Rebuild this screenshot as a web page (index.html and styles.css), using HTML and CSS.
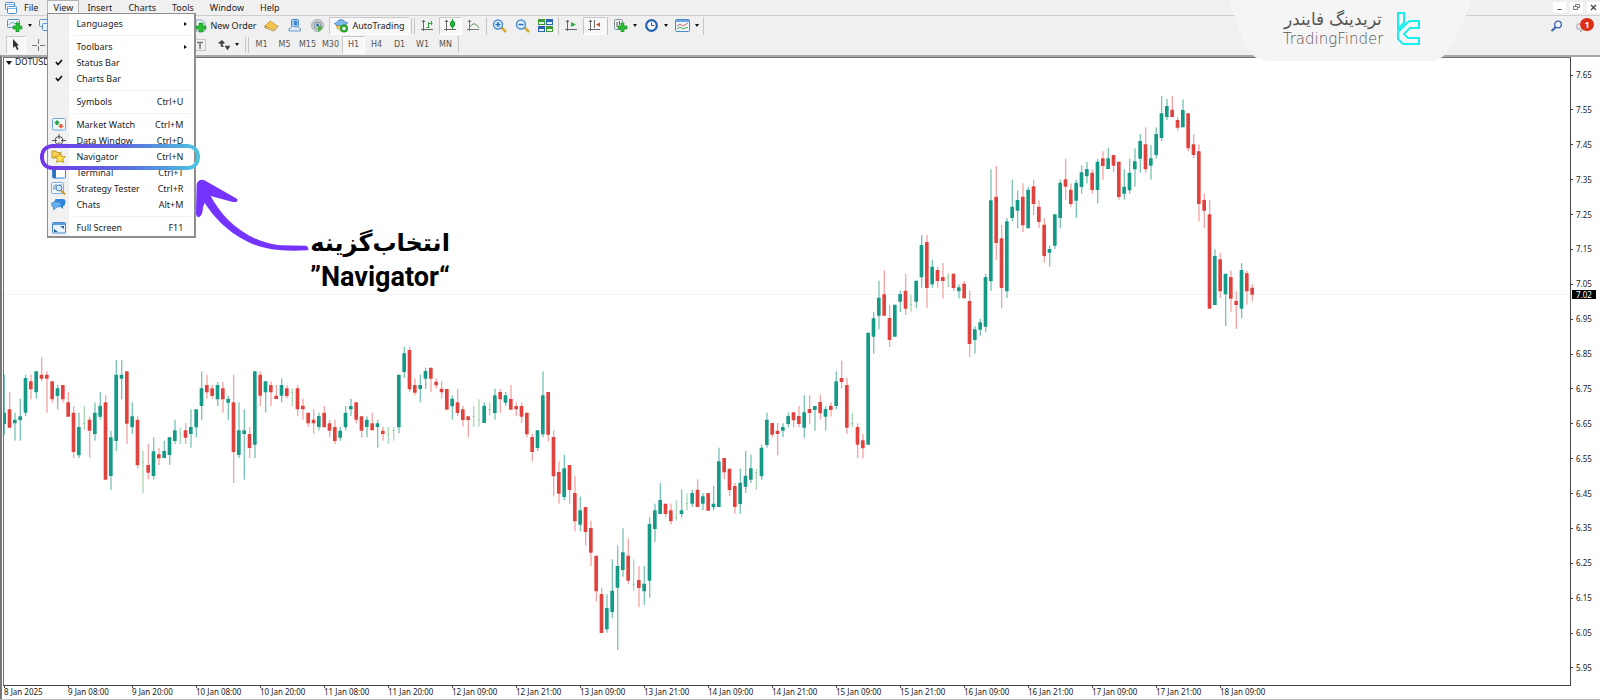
FILE: index.html
```html
<!DOCTYPE html>
<html lang="en">
<head>
<meta charset="utf-8">
<title>DOTUSD chart</title>
<link rel="stylesheet" href="styles.css">
</head>
<body>
<div class="app">
  <header class="menubar">
    <svg class="app-icon" width="14" height="12" viewBox="0 0 14 12"><g fill="#fff" stroke="#4b8fd6"><rect x="1.500" y=".5" width="9" height="7" rx="1"/><rect x="3.500" y="4.500" width="9" height="7" rx="1"/><path d="M2 2.500h8M4 6.500h8" stroke="#7fb2e6"/></g></svg>
    <nav class="menus">
      <button>File</button>
      <div class="menu-holder">
        <button class="open">View</button>
        <div class="popup">
          <button class="item"><span class="ico"></span><span class="name">Languages</span><span class="more"></span></button>
          <hr>
          <button class="item"><span class="ico"></span><span class="name">Toolbars</span><span class="more"></span></button>
          <button class="item"><span class="ico"><svg width="8" height="7" viewBox="0 0 8 7"><path d="M1 3l2 2.500 4-4.500" fill="none" stroke="#111" stroke-width="1.700"/></svg></span><span class="name">Status Bar</span></button>
          <button class="item"><span class="ico"><svg width="8" height="7" viewBox="0 0 8 7"><path d="M1 3l2 2.500 4-4.500" fill="none" stroke="#111" stroke-width="1.700"/></svg></span><span class="name">Charts Bar</span></button>
          <hr>
          <button class="item"><span class="ico"></span><span class="name">Symbols</span><kbd>Ctrl+U</kbd></button>
          <hr>
          <button class="item"><span class="ico"><svg width="14" height="13" viewBox="0 0 14 13"><rect x=".5" y=".5" width="13" height="11.500" rx="1" fill="#f4f9ff" stroke="#73a9df"/><path d="M5 2l3 3H6.500v2h-3V5H2z" fill="#27a344"/><path d="M9 10.500L6 8h1.500V6h3v2H12z" fill="#e8603c"/></svg></span><span class="name">Market Watch</span><kbd>Ctrl+M</kbd></button>
          <button class="item"><span class="ico"><svg width="14" height="13" viewBox="0 0 14 13"><g fill="none" stroke="#555"><circle cx="7" cy="6.500" r="4"/><path d="M7 0v5M7 8v5M0 6.500h5M9 6.500h5"/></g></svg></span><span class="name">Data Window</span><kbd>Ctrl+D</kbd></button>
          <button class="item marked"><span class="ico"><svg width="15" height="13" viewBox="0 0 15 13"><path d="M1 1h4l1 1.500h4V8H1z" fill="#f5cf58" stroke="#b98a1c" stroke-width=".8"/><path d="M9 3.500l1.800 2.800 3.500.4-2.500 2.300.8 3.500L9 11l-3.300 1.500.6-3.500L4 6.700l3.300-.4z" fill="#ffe04a" stroke="#b88a17" stroke-width=".8"/></svg></span><span class="name">Navigator</span><kbd>Ctrl+N</kbd></button>
          <button class="item"><span class="ico"><svg width="14" height="12" viewBox="0 0 14 12"><rect x=".5" y=".5" width="13" height="10.500" rx="1" fill="#fff" stroke="#3f86d0"/><path d="M1 1h3v10H1z" fill="#2f6fbd"/></svg></span><span class="name">Terminal</span><kbd>Ctrl+T</kbd></button>
          <button class="item"><span class="ico"><svg width="15" height="13" viewBox="0 0 15 13"><rect x=".5" y=".5" width="12" height="11" rx="1" fill="#eef5fc" stroke="#86aed6"/><path d="M3 3v5M5 2v5M10 2v3" stroke="#5b86b5"/><circle cx="8" cy="6" r="3" fill="#d4e9fb" stroke="#4a83bd"/><path d="M10 8.500l4 4" stroke="#c39b2a" stroke-width="2"/></svg></span><span class="name">Strategy Tester</span><kbd>Ctrl+R</kbd></button>
          <button class="item"><span class="ico"><svg width="15" height="13" viewBox="0 0 15 13"><path d="M5 1h7q2.500 0 2.500 3T12 8.500V11L9 8.500H5Q3.500 8 3.500 4.500T5 1z" fill="#2f86d8"/><path d="M3 4h5q2 0 2 2.500T8 9H6l-3.500 3V9Q.5 9 .5 6.500T3 4z" fill="#65b0ee" stroke="#2f7fc9" stroke-width=".6"/></svg></span><span class="name">Chats</span><kbd>Alt+M</kbd></button>
          <hr>
          <button class="item"><span class="ico"><svg width="14" height="12" viewBox="0 0 14 12"><rect x=".5" y=".5" width="13" height="10.500" rx="1" fill="#e9f3fd" stroke="#4587cc"/><path d="M1 1h12v2H1z" fill="#5d9be0"/><path d="M8 4h4v3zM6 10H2V7z" fill="#235f9f"/></svg></span><span class="name">Full Screen</span><kbd>F11</kbd></button>
        </div>
      </div>
      <button>Insert</button><button>Charts</button><button>Tools</button><button>Window</button><button>Help</button>
    </nav>
    <div class="window-buttons">
      <button aria-label="Minimize"><svg width="7" height="7" viewBox="0 0 7 7"><path d="M1.500 5.500h4" stroke="#555"/></svg></button>
      <button aria-label="Restore"><svg width="7" height="7" viewBox="0 0 7 7"><path d="M2.500 2V.5h4v3H5M.5 2.500h4v3h-4z" fill="none" stroke="#777"/></svg></button>
      <button aria-label="Close"><svg width="7" height="7" viewBox="0 0 7 7"><path d="M1 1l5 5M6 1L1 6" stroke="#444" stroke-width="1.300"/></svg></button>
    </div>
  </header>

  <div class="toolbar main-tools">
    <button class="drop first-drop" aria-label="New chart"><svg width="16" height="13" viewBox="0 0 16 13"><rect x=".5" y=".5" width="12" height="8" rx="1" fill="#eaf4ff" stroke="#5b92c9"/><path d="M2 6l3-3 3 2 3-3" fill="none" stroke="#6aa"/><path d="M9 4h3v3h3v3h-3v3H9v-3H6V7h3z" fill="#2bbf35" stroke="#138a1f" stroke-width=".6"/></svg></button>
    <button class="profiles" aria-label="Profiles"><svg width="15" height="13" viewBox="0 0 15 13"><g fill="#eaf4ff" stroke="#5b92c9"><rect x=".5" y=".5" width="10" height="7" rx="1"/><rect x="3.500" y="4.500" width="10" height="7" rx="1"/></g></svg></button>
    <button class="wide" ><svg width="14" height="14" viewBox="0 0 14 14"><path d="M3 1h6l3 3v8H3z" fill="#f4f6f8" stroke="#8aa0b5"/><path d="M6 4h4v3h3v3h-3v3H6v-3H3V7h3z" fill="#2bbf35" stroke="#138a1f" stroke-width=".6"/></svg>New Order</button>
    <button aria-label="Market"><svg width="15" height="12" viewBox="0 0 15 12"><path d="M1 6l5-5 8 5.500-4.500 4.500L1 7.500z" fill="#c98a1e" stroke="#94611a" stroke-width=".8"/><path d="M1.500 5.500L6 1l7.500 5L9 9.500z" fill="#f4c54c"/><path d="M2 7.200L9 10.300l4-3.500" fill="none" stroke="#fff3c0" stroke-width=".8"/></svg></button>
    <button aria-label="Community"><svg width="15" height="13" viewBox="0 0 15 13"><rect x="4.500" y=".5" width="7" height="7" rx="1" fill="#9ecbf2" stroke="#3d83c6"/><path d="M7 2h3v4H7z" fill="#3d83c6"/><path d="M2 12q-1-3 2-3.500Q6 5.500 8.500 8q2-1 3 .5 3 .5 2 3.500z" fill="#dbe9f6" stroke="#6f9cc6"/></svg></button>
    <button aria-label="Signals"><svg width="15" height="13" viewBox="0 0 15 13"><circle cx="7.500" cy="6.500" r="6" fill="#c9d0d4" stroke="#a3adb3"/><circle cx="7.500" cy="6.500" r="3.500" fill="none" stroke="#7f8c94"/><circle cx="7.500" cy="6" r="1.500" fill="#3777a8"/><path d="M8 7h4q1 3-4 6z" fill="#4fb04a"/></svg></button>
    <button class="wide pressed auto"><svg width="15" height="14" viewBox="0 0 15 14"><path d="M2 5l5 2 5-2v4l-5 3-4-3z" fill="#f3cb4a" stroke="#b78d1d" stroke-width=".6"/><path d="M0 4.500Q3 4 4 1.500q3-2 6 0 1 2.500 4 2-3 3.500-7 3.500T0 4.500z" fill="#7db7ea" stroke="#3f7fb9" stroke-width=".7"/><circle cx="10" cy="9.500" r="4" fill="#29a62f"/><path d="M8.500 8h3v3h-3z" fill="#fff"/></svg>AutoTrading</button>
    <i class="grip"></i>
    <button aria-label="Bar chart"><svg width="13" height="13" viewBox="0 0 13 13"><path d="M2.500 1v11M0 10.500h12M1 3l1.500-2L4 3" fill="none" stroke="#666"/><path d="M7.500 3v6M7 8.500H5.500M7.500 4.500h4M10.500 2v4" stroke="#34a344" fill="none"/></svg></button>
    <button class="pressed" aria-label="Candlesticks"><svg width="13" height="13" viewBox="0 0 13 13"><path d="M2.500 1v11M0 10.500h12M1 3l1.500-2L4 3" fill="none" stroke="#666"/><path d="M8.500 0v10" stroke="#1f8f30"/><rect x="6.500" y="2" width="4" height="6" rx="2" fill="#22b83b" stroke="#1f8f30"/></svg></button>
    <button aria-label="Line chart"><svg width="13" height="13" viewBox="0 0 13 13"><path d="M2.500 1v11M0 10.500h12M1 3l1.500-2L4 3" fill="none" stroke="#777"/><path d="M3 8q4-7 9 1" stroke="#579b61" fill="none"/></svg></button>
    <i class="sep"></i>
    <button aria-label="Zoom in"><svg width="15" height="14" viewBox="0 0 15 14"><path d="M9 8l5 5" stroke="#d1aa31" stroke-width="2.500"/><circle cx="6" cy="5.500" r="4.500" fill="#d9edfd" stroke="#4a8fd0" stroke-width="1.400"/><path d="M3.500 5.500h5M6 3v5" stroke="#2c6fb8" stroke-width="1.400"/></svg></button>
    <button aria-label="Zoom out"><svg width="15" height="14" viewBox="0 0 15 14"><path d="M9 8l5 5" stroke="#d1aa31" stroke-width="2.500"/><circle cx="6" cy="5.500" r="4.500" fill="#d9edfd" stroke="#4a8fd0" stroke-width="1.400"/><path d="M3.500 5.500h5" stroke="#2c6fb8" stroke-width="1.400"/></svg></button>
    <button aria-label="Tile windows"><svg width="15" height="13" viewBox="0 0 15 13"><path d="M0 0h7v6H0zM8 7h7v6H8z" fill="#3f9a35"/><path d="M8 0h7v6H8zM0 7h7v6H0z" fill="#2c63b4"/><path d="M1 3h5v2H1zM9 3h5v2H9zM1 10h5v2H1zM9 10h5v2H9z" fill="#e4f0e8"/></svg></button>
    <i class="sep"></i>
    <button aria-label="Auto scroll"><svg width="13" height="13" viewBox="0 0 13 13"><path d="M2.500 1v11M0 10.500h12M1 3l1.500-2L4 3" fill="none" stroke="#666"/><path d="M6 3l5 2.500L6 8z" fill="#2fae42"/></svg></button>
    <button class="pressed" aria-label="Chart shift"><svg width="13" height="13" viewBox="0 0 13 13"><path d="M2.500 1v11M0 10.500h12M1 3l1.500-2L4 3M6.500 1v8" fill="none" stroke="#666"/><path d="M12 3.500L8 5.500 12 8z" fill="#c2552e"/></svg></button>
    <i class="sep"></i>
    <button class="drop" aria-label="Indicators"><svg width="15" height="13" viewBox="0 0 15 13"><rect x="1.500" y=".5" width="8" height="10" rx="1" fill="#eef0f2" stroke="#85939e"/><path d="M4 3v5M6.500 2v4" stroke="#556"/><path d="M8 4h3v3h3v3h-3v3H8v-3H5V7h3z" fill="#2bbf35" stroke="#138a1f" stroke-width=".6"/></svg></button>
    <button class="drop" aria-label="Periods"><svg width="15" height="13" viewBox="0 0 15 13"><circle cx="7.500" cy="6.500" r="5.300" fill="#f4f9ff" stroke="#2263ad" stroke-width="2.200"/><path d="M7.500 3.500v3h3" fill="none" stroke="#456"/></svg></button>
    <button class="drop" aria-label="Templates"><svg width="15" height="13" viewBox="0 0 15 13"><rect x=".5" y=".5" width="14" height="12" rx="1" fill="#eef6fe" stroke="#4b88c6"/><path d="M1 1h13v2H1z" fill="#6fa8e0"/><path d="M2 7l3-2 3 2 5-3" fill="none" stroke="#c66"/><path d="M2 10l3-2 3 2 5-2" fill="none" stroke="#4a4"/></svg></button>
    <i class="sep"></i>
    <div class="right-tools">
      <button aria-label="Search"><svg width="13" height="12" viewBox="0 0 13 12"><path d="M6 7l-4.500 4" stroke="#3d5fb0" stroke-width="2"/><circle cx="8" cy="4.500" r="3.300" fill="#f2f6ff" stroke="#3d5fb0" stroke-width="1.300"/></svg></button>
      <button class="alerts" aria-label="Notifications"><svg width="14" height="12" viewBox="0 0 14 12"><path d="M1 4h9v5H7l-2 3-1-3H1z" fill="#e8e8e8" stroke="#aaa"/></svg><b class="badge">1</b></button>
    </div>
  </div>

  <div class="toolbar frames">
    <button class="pressed cursor" aria-label="Cursor"><svg width="8" height="12" viewBox="0 0 8 12"><path d="M1 0v9l2-2 2 4 1.500-.7-1.700-3.800H7z" fill="#333"/></svg></button>
    <button class="cross" aria-label="Crosshair"><svg width="13" height="12" viewBox="0 0 13 12"><path d="M6.500 0v5M6.500 7v5M0 6.500h5M8 6.500h5" stroke="#777"/></svg></button>
    <button class="label-tool" aria-label="Text label"><svg width="12" height="12" viewBox="0 0 12 12"><path d="M.5.5h11v11H.5z" fill="none" stroke="#999" stroke-dasharray="1 1"/><path d="M3 3.500h6M6 3.500V10" stroke="#777" stroke-width="1.500"/></svg></button>
    <button class="drop arrows" aria-label="Arrows"><svg width="12" height="10" viewBox="0 0 12 10"><path d="M4 0l3 3-3 1.500L0 3z" fill="#444"/><path d="M3 3v3.500h3M7 6h5l-2.500 4z" fill="#444" stroke="#444" stroke-width=".5"/></svg></button>
    <i class="grip"></i>
    <button>M1</button><button>M5</button><button>M15</button><button>M30</button><button class="pressed">H1</button><button>H4</button><button>D1</button><button>W1</button><button>MN</button>
    <i class="sep"></i>
  </div>

  <main class="chart">
    <section class="plot">
      <svg class="candles" id="candles" role="img" aria-label="DOTUSD hourly candlesticks"></svg>
      <div class="symbol"><i></i>DOTUSD,H1</div>
    </section>
    <aside class="prices" id="prices"><b class="last">7.02</b></aside>
    <footer class="times" id="times"></footer>
  </main>

  <div class="brand">
    <svg class="brand-shape" width="244" height="62" viewBox="0 0 244 62"><path d="M0 0C9 18 11 38 23 53Q29 61 43 61H202Q212 61 218 53C230 37 236 18 244 0Z" fill="#f5f5f5"/></svg>
    <div class="brand-text"><span class="brand-fa" lang="fa" dir="rtl">تریدینگ فایندر</span><span>TradingFinder</span></div>
    <svg class="brand-logo" width="24" height="34" viewBox="0 0 24 34"><g fill="none" stroke="#19eeee" stroke-width="2"><path d="M2 1h6v10L2 17z"/><path d="M23 9h-8q-2 0-4 2L2 20v7l5 5h16v-6H12l-4-4 6-6h9z"/></g></svg>
  </div>

  <div class="note">
    <svg class="note-arrow" width="114" height="72" viewBox="48 28 342 216"><path d="M50 44Q56 24 76 33L168 86Q176 90 170 96 160 98 150 95L92 79C130 150 200 215 300 227L378 228Q388 233 384 242C300 246 250 240 200 215 140 185 100 140 74 100Q68 110 68 125 66 137 57 143 48 142 48 130Z" fill="#7433ff"/></svg>
    <p class="note-text"><span class="note-fa" lang="fa" dir="rtl">انتخاب‌گزینه</span><span>”Navigator“</span></p>
  </div>
</div>
<script src="chart.js"></script>
</body>
</html>
```
FILE: styles.css
```css
* { box-sizing: border-box; }
body { margin: 0; background: #f0f0f0; color: #222; font: 9px/12px "Noto Sans", "Open Sans", sans-serif; }
button { border: 0; margin: 0; padding: 0; background: none; color: inherit; font: inherit; }
svg { display: block; flex: none; }
.app { position: relative; display: flex; flex-direction: column; height: 100vh; overflow: hidden; border-bottom: 1px solid #bbb; }

.menubar { display: flex; align-items: center; height: 16px; padding-left: 4px; border-bottom: 1px solid #cfcfcf; }
.menus { display: flex; align-items: center; height: 16px; }
.menus > button, .menu-holder > button { padding: 0 8px; height: 16px; }
.app-icon { margin-right: -2px; }
.menu-holder { position: relative; margin-left: 1px; }
.menu-holder > .open { border: 1px solid #b4b4b4; border-bottom: 0; width: 32px; padding: 0; background: #f6f6f6; }
.window-buttons { display: flex; gap: 4px; margin-left: auto; }
.window-buttons button { display: grid; place-items: center; width: 13px; height: 11px; background: #fff; }

.popup { position: absolute; z-index: 5; left: 0; top: 13px; width: 149px; padding: 2px 1px 0 0; border: 1px solid #8e8e8e; border-width: 1px 2px 2px 1px; background: linear-gradient(90deg, #f1f1f1 21px, #fff 21px); }
.popup hr { height: 1px; margin: 3px 2px 3px 26px; border: 0; background: #f1f1f1; }
.item { position: relative; display: flex; align-items: center; width: 100%; height: 16px; }
.ico { display: grid; place-items: center; width: 21px; flex: none; }
.name { margin-left: 7px; }
.item kbd { margin-left: auto; margin-right: 10px; font: inherit; }
.more { margin-left: auto; margin-right: 6px; border: 2px solid transparent; border-left: 3px solid #111; border-right: 0; }
.marked::after { content: ""; position: absolute; z-index: 2; inset: -5px -7px -5px -8px; padding: 4px; border-radius: 12px; background: linear-gradient(90deg, #7233ea, #5a6fe0 55%, #4dc6dc); -webkit-mask: linear-gradient(#000 0 0) content-box exclude, linear-gradient(#000 0 0); mask: linear-gradient(#000 0 0) content-box exclude, linear-gradient(#000 0 0); }

.toolbar { display: flex; align-items: center; height: 19px; }
.toolbar button { display: flex; align-items: center; justify-content: center; width: 23px; height: 18px; }
.toolbar .pressed { border: 1px solid #c9c9c9; border-right-color: #fff; border-bottom-color: #fff; background: #f8f8f8; }
.toolbar .wide { width: 70px; gap: 3px; }
.toolbar .auto { width: 81px; }
.toolbar .drop { width: 31px; gap: 5px; }
.toolbar .drop::after { content: ""; border: 2px solid transparent; border-top: 3px solid #111; border-bottom: 0; }
.toolbar .first-drop { margin-left: 4px; }
.toolbar .profiles { margin-right: 132px; }
.sep { width: 1px; height: 18px; margin: 0 1px; background: #c6c6c6; }
.grip { width: 4px; height: 16px; margin: 0 1px; border: 1px solid #c6c6c6; border-width: 0 1px; }
.right-tools { display: flex; align-items: center; gap: 3px; margin-left: auto; padding-right: 6px; }
.toolbar .alerts { position: relative; }
.badge { position: absolute; right: 0; top: 1px; width: 14px; height: 13px; border-radius: 7px; background: #dc2f17; color: #fff; line-height: 13px; }
.frames { color: #555; font: 8px/10px "DejaVu Sans", sans-serif; }
.toolbar .cursor { margin-left: 6px; width: 20px; }
.toolbar .cross { width: 25px; }
.toolbar .label-tool { width: 14px; margin-left: 142px; margin-right: 6px; }
.frames .sep { height: 17px; }

.chart { flex: 1; min-height: 0; display: grid; grid-template-columns: 1fr 29px; grid-template-rows: 1fr 13px; margin-top: 1px; border-top: 2px solid #a8a8a8; border-left: 2px solid #777; background: #fff; }
.plot { position: relative; overflow: hidden; margin-left: 1px; border: 1px solid #707070; border-bottom-color: #444; border-right-color: #444; }
.candles { width: 100%; height: 100%; }
.symbol { position: absolute; left: 2px; top: 0; display: flex; align-items: center; gap: 3px; font: 8px/10px "DejaVu Sans", sans-serif; }
.symbol i { border: 3px solid transparent; border-top: 4px solid #111; border-bottom: 0; }
.prices { position: relative; display: flex; flex-direction: column; justify-content: space-between; padding: 13px 0; font-size: 8px; line-height: 10px; }
.prices span { display: flex; align-items: center; gap: 3px; }
.prices span::before { content: ""; width: 2px; height: 1px; background: #444; }
.last { position: absolute; left: 1px; top: 233px; width: 24px; padding-left: 4px; background: #000; color: #fff; font-weight: 400; line-height: 9px; }
.times { display: flex; grid-column: 1 / 3; margin-left: 2px; font-size: 8px; line-height: 8px; }
.times span { flex: none; width: 64px; white-space: nowrap; }
.times span::before { content: ""; display: block; width: 1px; height: 2px; background: #444; }

.brand { position: absolute; z-index: 3; right: 128px; top: 0; width: 244px; height: 62px; display: flex; gap: 12px; align-items: flex-start; padding: 9px 26px 0 54px; color: #555; }
.brand-shape { position: absolute; left: 0; top: 0; }
.brand-text { position: relative; display: flex; flex-direction: column; width: 102px; font: 200 15px/20px "DejaVu Sans", sans-serif; white-space: nowrap; }
.brand-text span { text-align: center; }
.brand-text .brand-fa { font-size: 17px; }
.brand-logo { position: relative; margin-top: 3px; }

.note { position: absolute; z-index: 6; left: 196px; top: 179px; display: flex; }
.note-text { display: flex; flex-direction: column; align-items: center; margin: 47px 0 0; color: #000; font: 700 27px/34px Roboto, "DejaVu Sans", sans-serif; white-space: nowrap; }
.note-fa { font-size: 24px; }
```
FILE: chart.js
```js
// Each candle: high, body top, body bottom, low, in thirds of a pixel below
// the segment's own top edge. "g" rises, "r" falls, "d" closes where it opened.
const segments = [
  { top: 330, rows: `g134,248,282,314 r186,238,293,293 g248,269,280,332 g206,259,270,332 g134,144,248,258 r134,154,178,208 g124,124,187,206 r82,134,146,154 r124,134,146,248 r154,154,208,218 g165,175,198,238 r165,165,208,218 r186,217,260,260 r228,248,366,384 g248,291,376,384 d228,279,281,300 r260,269,302,384 g217,248,312,332 g186,227,260,269 r196,217,449,449 g302,322,438,480 g90,134,333,363 g90,134,146,208 r124,124,281,342 g217,259,292,312 r259,269,406,416 d363,396,398,490 r342,405,428,448 g322,364,438,448 r353,373,385,405 g332,363,384,384 g322,322,375,405 g269,301,333,342 d293,311,313,342 r279,301,323,342 g238,291,312,353 g238,238,292,322 g124,175,228,269 r134,165,187,206 r165,175,198,206 g156,165,208,228 r156,175,208,248 g197,206,218,269 r134,217,366,459 g217,301,375,384 g238,301,312,449 r291,312,354,384 g124,124,344,384 r124,134,197,228 g154,154,187,248 r154,165,187,228 r165,197,207,207 g145,165,197,217 r165,175,198,206 d175,186,188,228 r165,175,238,258 r206,227,238,269 r248,248,280,291 r238,269,280,312 g248,258,291,301 r228,248,292,292 r270,280,302,322 r269,291,333,342 g291,302,323,332 g228,248,292,301 g206,228,238,258 r217,217,269,280 r258,259,302,323 g259,269,291,322 r248,280,301,301 g269,280,291,353 r291,302,312,332 d291,311,313,342 d291,300,302,332 g134,134,292,310 g50,70,126,144 r50,60,178,186 r145,165,188,196 g134,165,177,217 g113,123,146,177 r113,113,146,186 r145,155,166,175 r154,176,187,206 r176,177,239,239 g196,206,229,269 r176,217,249,258 r228,238,270,290 r259,259,270,322 d228,258,260,290 d208,269,271,290 g217,227,279,279 d217,237,239,256 g176,196,249,269 r176,186,208,248 g186,196,218,228 r165,207,239,239 r217,228,238,258 r217,228,260,279 r248,248,313,322 r312,321,366,394 g301,301,354,363 g124,196,313,322 r186,186,314,334 r301,321,439,499 r394,426,491,521 g374,415,501,511 r405,405,480,521 r438,489,574,604 g500,541,584,604 r531,531,606,647 r572,594,668,708 r677,677,784,814 r773,792,909,909 g793,834,898,908 g688,782,846,865 g646,708,773,960 g595,667,720,740 r626,677,752,762 d688,762,764,782 r708,750,774,832 g708,761,784,825 g562,582,752,803 g521,541,597,636 g459,510,552,552 r521,521,552,562 r521,541,574,584 d511,562,564,572 g479,541,552,562 d490,519,521,541 g479,489,521,531 r448,479,531,531 g489,499,521,541 r489,489,542,542 g468,521,532,541 g353,394,531,531 r384,384,427,447 r415,416,480,499 r459,468,531,551 g416,458,522,551 g363,437,470,489 g374,415,449,459 d416,427,429,479 g344,353,439,449 g248,269,345,353 r279,279,314,322 r279,302,312,376 g280,291,302,322` },
  { top: 220, rows: `g577,588,612,622 r577,577,601,622 r558,588,612,622 g526,577,623,653 r526,567,579,612 g558,558,570,632 r524,546,580,598 g558,567,590,632 r547,557,570,590 g454,484,558,568 r422,474,486,506 r474,495,623,642 d578,609,611,622 r610,621,674,715 r642,661,685,715 g338,338,674,674 g276,295,350,401 g182,233,287,328 r151,223,287,287 r254,294,360,381 g254,254,350,350 g212,222,245,276 r162,212,266,285 d224,253,255,275 g182,182,245,265 g45,75,172,203 r45,66,204,265 g119,140,193,203 r141,150,183,203 r129,171,183,235 d160,171,173,202 r160,161,204,214 g193,202,214,235 r183,191,235,235 r212,243,372,411 g318,328,360,401 g296,307,329,347` },
  { top: 90, rows: `g551,561,710,727 g238,331,574,603 r228,320,459,509 r405,445,594,655 g384,394,604,624 g269,350,384,394 g301,330,362,415 r280,320,406,426 g290,299,415,415 r269,289,342,375 r331,350,396,414 r384,404,498,518 g467,477,488,530 g373,373,467,477 g269,278,384,415 r206,268,290,329 r280,299,342,352 g269,278,332,384 g226,247,291,311 g216,237,259,280 r238,248,300,311 g206,215,300,340 r184,205,228,269 g173,205,237,237 r195,195,227,247 r215,215,321,329 g238,290,311,329 g206,248,301,311 g175,214,238,290 g132,153,206,248 r112,163,238,248 g165,205,227,269 g112,132,195,206 g18,70,144,153 g27,48,81,90 r18,59,81,81 r81,90,113,122 g28,60,112,112 r70,70,175,184 r132,163,195,204 r163,184,342,394 r310,330,362,414 r331,373,656,656 g478,498,645,645 r488,508,604,624 g551,551,613,708 r542,561,626,665 r604,633,645,717 g519,540,656,685 r542,550,604,644 r583,593,614,634` }
];
const top0 = 58, step = 16;
const bodyFill = { g: '#149a86', r: '#e2423e', d: '#7cc79a' };
const wickFill = { g: '#7cc4b8', r: '#f3a6a6', d: '#a9d9b5' };
let x = 1, out = '';
for (const s of segments) {
  for (const row of s.rows.trim().split(/\s+/)) {
    const kind = row[0];
    const [high, a, b, low] = row.slice(1).split(',').map(v => +v + (s.top - top0) * 3);
    const w = kind === 'd' ? 7 : 11;
    out += `<rect x="${x - 2}" y="${high}" width="4" height="${low - high}" fill="${wickFill[kind]}"/>`;
    out += `<rect x="${x - (w - 1) / 2 - 1}" y="${a}" width="${w}" height="${b - a}" rx="1" fill="${bodyFill[kind]}"/>`;
    x += step;
  }
}
document.getElementById('candles').innerHTML =
  `<rect x="0" y="236" width="100%" height="1" fill="#f4f4f4"/><g transform="scale(.33333)">${out}</g>`;

const prices = document.getElementById('prices');
for (let p = 765; p >= 595; p -= 10) {
  const el = document.createElement('span');
  el.textContent = (p / 100).toFixed(2);
  prices.append(el);
}
const times = ['8 Jan 2025', '9 Jan 08:00', '9 Jan 20:00', '10 Jan 08:00', '10 Jan 20:00', '11 Jan 08:00', '11 Jan 20:00',
  '12 Jan 09:00', '12 Jan 21:00', '13 Jan 09:00', '13 Jan 21:00', '14 Jan 09:00', '14 Jan 21:00', '15 Jan 09:00',
  '15 Jan 21:00', '16 Jan 09:00', '16 Jan 21:00', '17 Jan 09:00', '17 Jan 21:00', '18 Jan 09:00'];
document.getElementById('times').innerHTML = times.map(t => `<span>${t}</span>`).join('');
```
